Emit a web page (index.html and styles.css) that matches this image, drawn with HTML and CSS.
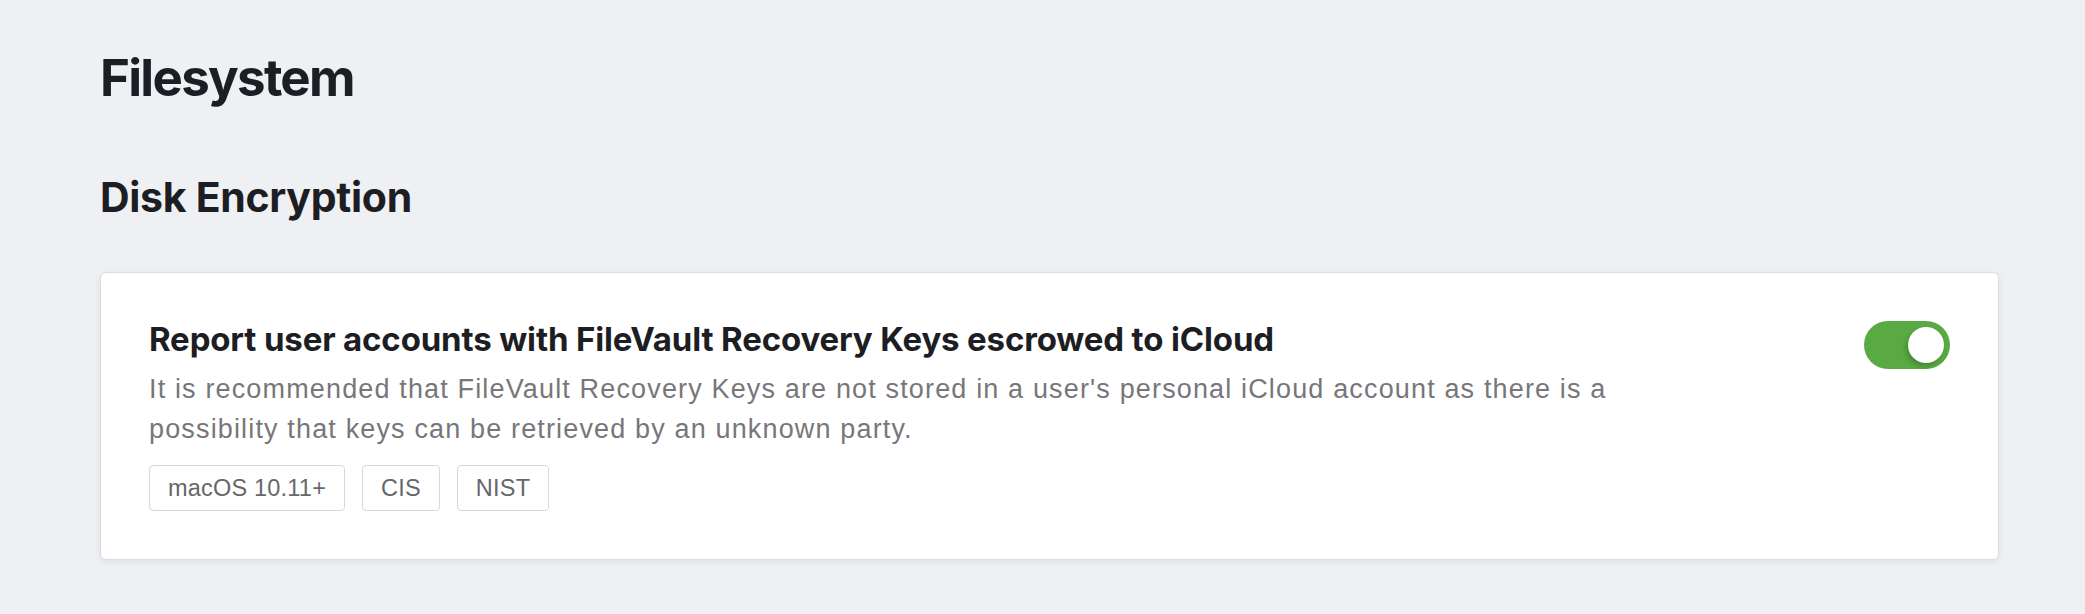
FILE: index.html
```
<!DOCTYPE html>
<html lang="en">
<head>
<meta charset="utf-8">
<title>Filesystem</title>
<link rel="stylesheet" href="styles.css">
</head>
<body>
<main class="page">
  <h1 class="page-title">Filesystem</h1>
  <section class="section">
    <h2 class="section-title">Disk Encryption</h2>
    <div class="card">
      <div class="card-body">
        <h3 class="rule-title">Report user accounts with FileVault Recovery Keys escrowed to iCloud</h3>
        <p class="rule-desc">It is recommended that FileVault Recovery Keys are not stored in a user's personal iCloud account as there is a possibility that keys can be retrieved by an unknown party.</p>
        <ul class="tags">
          <li class="tag">macOS 10.11+</li>
          <li class="tag">CIS</li>
          <li class="tag">NIST</li>
        </ul>
      </div>
      <button class="toggle is-on" type="button" aria-pressed="true"><span class="knob"></span></button>
    </div>
  </section>
</main>
</body>
</html>
```

FILE: styles.css
```
html, body {
  margin: 0;
  padding: 0;
  background: #eff0f4;
}

.page {
  padding: 47px 86px 40px 100px;
  font-family: "Liberation Sans", Arial, sans-serif;
}

.page-title {
  margin: 0;
  font-family: "Inter", "Liberation Sans", sans-serif;
  font-weight: 700;
  font-size: 51px;
  line-height: 1.2;
  letter-spacing: -1.7px;
  color: #1d1e23;
}

.section {
  margin-top: 65px;
}

.section-title {
  margin: 0 0 50px;
  font-family: "Inter", "Liberation Sans", sans-serif;
  font-weight: 700;
  font-size: 41px;
  line-height: 1.2;
  letter-spacing: -0.3px;
  color: #1d1e23;
}

.card {
  display: flex;
  justify-content: space-between;
  align-items: flex-start;
  gap: 40px;
  background: #ffffff;
  border: 1px solid #dcdde1;
  border-radius: 6px;
  padding: 48px;
  box-shadow: 0 2px 6px rgba(30, 35, 60, 0.08);
}

.card-body {
  flex: 1;
  min-width: 0;
}

.rule-title {
  margin: 0;
  font-family: "Inter", "Liberation Sans", sans-serif;
  font-weight: 700;
  font-size: 33px;
  line-height: 36px;
  letter-spacing: -0.15px;
  color: #1d1e23;
}

.rule-desc {
  margin: 12px 0 0;
  max-width: 1520px;
  font-size: 27px;
  line-height: 40px;
  letter-spacing: 1.15px;
  color: #77777b;
}

.tags {
  display: flex;
  gap: 17px;
  list-style: none;
  margin: 16px 0 0;
  padding: 0;
}

.tag {
  border: 1px solid #d8d8da;
  border-radius: 4px;
  padding: 0 18px;
  font-size: 23.5px;
  line-height: 44px;
  letter-spacing: 0.2px;
  color: #67676a;
}

.toggle {
  flex: none;
  position: relative;
  width: 86px;
  height: 48px;
  padding: 0;
  border: none;
  border-radius: 24px;
  background: #59aa43;
  cursor: pointer;
}

.toggle .knob {
  position: absolute;
  top: 6px;
  right: 6px;
  width: 36px;
  height: 36px;
  border-radius: 50%;
  background: #ffffff;
  box-shadow: -2px 3px 5px rgba(0, 0, 0, 0.22);
}
```
